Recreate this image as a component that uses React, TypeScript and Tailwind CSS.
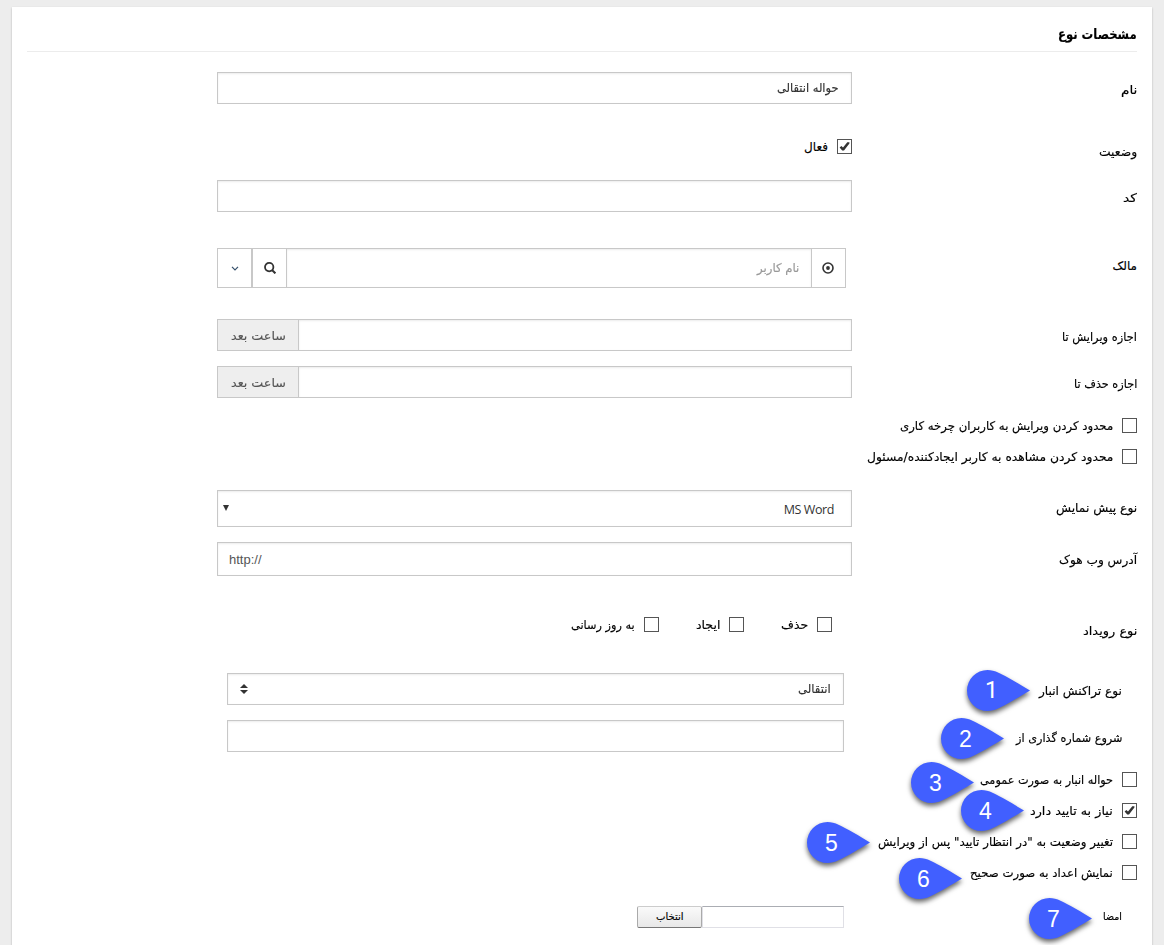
import { useLayoutEffect, useRef, useState } from "react";
import type { ReactNode } from "react";

/** Single line of Persian text condensed or stretched to a given width. */
function Fit({ w, className = "", children }: { w: number; className?: string; children: ReactNode }) {
  const inner = useRef<HTMLSpanElement>(null);
  const [scale, setScale] = useState(1);
  useLayoutEffect(() => {
    if (inner.current) setScale(w / inner.current.offsetWidth);
  }, [w]);
  return (
    <span className={`flex shrink-0 justify-start whitespace-nowrap ${className}`} style={{ width: w }}>
      <span
        ref={inner}
        className="inline-block shrink-0 origin-right [-webkit-text-stroke:0.15px_currentColor]"
        style={{ transform: `scaleX(${scale})` }}
      >
        {children}
      </span>
    </span>
  );
}

function Row({ label, w, className, labelClass, children }: {
  label: string; w: number; className: string; labelClass: string; children?: ReactNode;
}) {
  return (
    <div className={`flex items-start ${className}`}>
      <div className={`flex h-5 w-[285px] shrink-0 items-center ${labelClass}`}>
        <Fit w={w}>{label}</Fit>
      </div>
      {children}
    </div>
  );
}

const field = "flex items-center border border-[#c8c8c8] bg-white shadow-[inset_0_1px_2px_rgba(0,0,0,0.08)]";

function Check({ label, w, checked, className = "" }: { label: string; w: number; checked?: boolean; className?: string }) {
  return (
    <label className={`flex h-[15px] items-center gap-[9px] ${className}`}>
      <span className="flex size-[15px] shrink-0 items-center justify-center border border-[#555] bg-white">
        {checked && (
          <svg viewBox="0 0 13 13" className="size-[13px]">
            <path d="M1.6 7.4 3.4 5.9 5 7.4 9.3 2.2H11.4V3.6L6 10.4H4.2Z" fill="#333" />
          </svg>
        )}
      </span>
      <Fit w={w}>{label}</Fit>
    </label>
  );
}

function Marker({ n, className }: { n: number; className: string }) {
  return (
    <div className={`absolute h-[41px] w-[63px] ${className}`} dir="ltr">
      <svg viewBox="0 0 63 41" className="h-[41px] w-[63px] overflow-visible drop-shadow-[0_3px_2.5px_rgba(0,0,0,0.6)]">
        <path
          d="M63 20.5 C52 14 41 7 31.5 2.8 C28 1 24 0 20.5 0 A20.5 20.5 0 0 0 20.5 41 C24 41 28 40 31.5 38.2 C41 34 52 27 63 20.5Z"
          fill="#415fff"
        />
      </svg>
      <span
        className={`absolute top-0 left-0 flex h-[42px] w-[49px] items-center justify-center text-[23px] text-white ${
          n === 1 ? "font-[Roboto,sans-serif]" : "font-['Liberation_Sans',sans-serif]"
        }`}
      >
        {n}
      </span>
    </div>
  );
}

export default function App() {
  return (
    <div dir="rtl" className="relative h-[945px] w-[1164px] overflow-hidden bg-[#ededed] px-3 pt-[7px] font-['DejaVu_Sans',sans-serif] text-[12px] leading-5 text-black">
      <main className="h-[945px] bg-white px-[15px] shadow-[0_1px_2px_rgba(0,0,0,0.25)]">
        <h1 className="flex h-[45px] items-center border-b border-[#ececec] pt-[9px] text-[14px] font-bold">
          <Fit w={79}>مشخصات نوع</Fit>
        </h1>

        <Row label="نام" w={16} className="mt-5 h-8" labelClass="mt-2">
          <div className={`${field} h-8 w-[635px] px-3 text-[#333]`}>
            <Fit w={62}>حواله انتقالی</Fit>
          </div>
        </Row>
        <Row label="وضعیت" w={38} className="mt-[35px] h-[15px]" labelClass="mt-[3px]">
          <Check label="فعال" w={24} checked />
        </Row>
        <Row label="کد" w={14} className="mt-[26px] h-8" labelClass="mt-2">
          <div className={`${field} h-8 w-[635px]`} />
        </Row>
        <Row label="مالک" w={24} className="mt-9 h-10" labelClass="mt-2">
          <div className="mr-[6px] flex h-10 w-[629px] border border-[#c8c8c8]">
            <div className="flex w-[34px] items-center justify-center border-l border-[#c8c8c8] pr-px">
              <svg viewBox="0 0 12 12" className="size-3">
                <circle cx="6" cy="6" r="5" fill="none" stroke="#333" strokeWidth="1.6" />
                <circle cx="6" cy="6" r="1.9" fill="#333" />
              </svg>
            </div>
            <div className="flex flex-1 items-center px-3 text-[#999] shadow-[inset_0_1px_2px_rgba(0,0,0,0.08)]">
              <Fit w={42}>نام کاربر</Fit>
            </div>
            <div className="flex w-[34px] items-center justify-center border-r border-[#c8c8c8]">
              <svg viewBox="0 0 12 12" className="size-3">
                <circle cx="5.2" cy="5.1" r="4.2" fill="none" stroke="#333" strokeWidth="1.8" />
                <path d="M8 8 11.4 11.4" stroke="#333" strokeWidth="2" />
              </svg>
            </div>
            <div className="flex w-[35px] items-center justify-center border-r-2 border-[#c8c8c8]">
              <svg viewBox="0 0 8 5" className="ml-px h-[5px] w-2">
                <path d="M1 .8 4 3.8 7 .8" fill="none" stroke="#36506b" strokeWidth="1.2" />
              </svg>
            </div>
          </div>
        </Row>
        <Row label="اجازه ویرایش تا" w={75} className="mt-[31px] h-8" labelClass="mt-2">
          <div className={`${field} h-8 w-[554px]`} />
          <div className="flex h-8 w-[81px] items-center justify-center border border-r-0 border-[#c8c8c8] bg-[#eee] pt-0.5 text-[#555]">
            <Fit w={55}>ساعت بعد</Fit>
          </div>
        </Row>
        <Row label="اجازه حذف تا" w={63} className="mt-[15px] h-8" labelClass="mt-2">
          <div className={`${field} h-8 w-[554px]`} />
          <div className="flex h-8 w-[81px] items-center justify-center border border-r-0 border-[#c8c8c8] bg-[#eee] pt-0.5 text-[#555]">
            <Fit w={55}>ساعت بعد</Fit>
          </div>
        </Row>
        <Check className="mt-5" label="محدود کردن ویرایش به کاربران چرخه کاری" w={213} />
        <Check className="mt-4" label="محدود کردن مشاهده به کاربر ایجادکننده/مسئول" w={246} />

        <Row label="نوع پیش نمایش" w={81} className="mt-[26px] h-[37px]" labelClass="mt-2">
          <div className={`${field} h-[37px] w-[635px] justify-between pr-[17px] pl-[5px] text-[#333]`}>
            <span dir="ltr" className="pt-0.5 font-['Open_Sans',sans-serif] text-[12.5px] tracking-[-0.4px]">MS Word</span>
            <svg viewBox="0 0 6 6" className="mb-[2px] size-[6px]">
              <path d="M0 0H6L3 6Z" fill="#333" />
            </svg>
          </div>
        </Row>
        <Row label="آدرس وب هوک" w={78} className="mt-[15px] h-[34px]" labelClass="mt-2">
          <div className={`${field} h-[34px] w-[635px] justify-end pt-0.5 pr-[11px] pl-[11px] text-[#555]`}>
            <span dir="ltr" className="font-['Liberation_Sans',sans-serif] text-[13px]">http://</span>
          </div>
        </Row>
        <Row label="نوع رویداد" w={54} className="mt-[41px] h-[15px]" labelClass="mt-1">
          <Check className="mr-5" label="حذف" w={27} />
          <Check className="mr-[37px]" label="ایجاد" w={24} />
          <Check className="mr-[37px]" label="به روز رسانی" w={64} />
        </Row>

        <div className="px-[15px]">
          <Row label="نوع تراکنش انبار" w={83} className="mt-[41px] h-8" labelClass="mt-2 -ml-[7px]">
            <div className={`${field} h-8 w-[617px] justify-between pr-3 pl-3 text-[#333]`}>
              <Fit w={33}>انتقالی</Fit>
              <svg viewBox="0 0 8 10" className="h-[10px] w-2">
                <path d="M0 4 4 0 8 4ZM0 6H8L4 10Z" fill="#333" />
              </svg>
            </div>
          </Row>
          <Row label="شروع شماره گذاری از" w={106} className="mt-[15px] h-8" labelClass="mt-2 -ml-[7px]">
            <div className={`${field} h-8 w-[617px]`} />
          </Row>
        </div>
        <Check className="mt-5" label="حواله انبار به صورت عمومی" w={133} />
        <Check className="mt-4" label="نیاز به تایید دارد" w={83} checked />
        <Check className="mt-4" label={'تغییر وضعیت به "در انتظار تایید" پس از ویرایش'} w={235} />
        <Check className="mt-4" label="نمایش اعداد به صورت صحیح" w={143} />
        <div className="px-[15px] text-[10px]">
          <Row label="امضا" w={19} className="mt-[26px] h-[22px]" labelClass="mt-px -ml-[7px]">
            <div className="h-[22px] w-[142px] border border-[#e0e0e6] border-t-[#abadb3]" />
            <button className="flex h-[22px] w-[65px] items-center justify-center rounded-[2px] border border-[#aaa] border-t-[#ccc] border-b-[#777] bg-gradient-to-b from-[#fafafa] to-[#e8e8e8]">
              <Fit w={28}>انتخاب</Fit>
            </button>
          </Row>
        </div>
      </main>

      <Marker n={1} className="top-[670px] left-[967px]" />
      <Marker n={2} className="top-[718px] left-[941px]" />
      <Marker n={3} className="top-[762px] left-[911px]" />
      <Marker n={4} className="top-[790px] left-[961px]" />
      <Marker n={5} className="top-[822px] left-[807px]" />
      <Marker n={6} className="top-[858px] left-[899px]" />
      <Marker n={7} className="top-[898px] left-[1029px]" />
    </div>
  );
}
